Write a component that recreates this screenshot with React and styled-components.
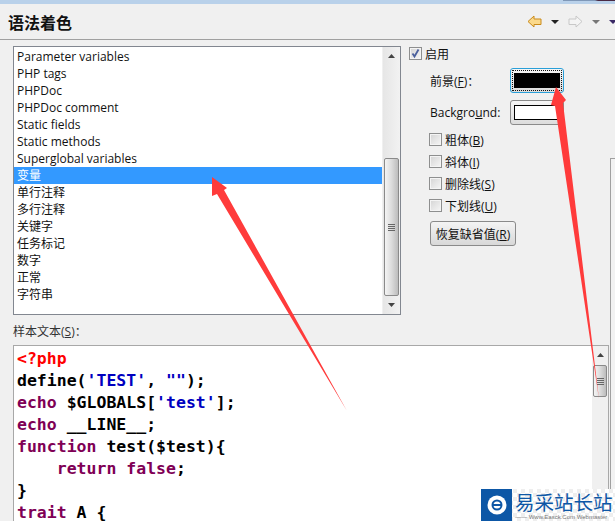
import React from 'react';
import styled, { createGlobalStyle } from 'styled-components';

const Global = createGlobalStyle`
  html, body { margin: 0; padding: 0; background: #f0f0f0; }
  body { width: 615px; height: 521px; overflow: hidden; }
`;

const UI = '"Liberation Sans", "Noto Sans CJK SC", sans-serif';

const Page = styled.div`
  position: relative;
  width: 615px;
  height: 521px;
  overflow: hidden;
  background: #f0f0f0;
  font-family: "Open Sans", "Noto Sans CJK SC", sans-serif;
  font-size: 12px;
  color: #111;
`;

const TopStrip = styled.div`
  height: 4px;
  background:
    linear-gradient(to right, transparent 563px, #7f98b8 563px, #7f98b8 595px, #4a2a44 598px) 0 0 / 100% 1px no-repeat,
    #b9d1ea;
`;

const Header = styled.header`
  display: flex;
  align-items: center;
  justify-content: space-between;
  height: 35px;
  padding: 0 0 0 8px;
  border-bottom: 1px solid #a0a0a0;
`;

const Title = styled.h1`
  margin: 0;
  font: bold 16px ${UI};
  color: #111;
`;

const Nav = styled.div`
  display: flex;
  align-items: center;
  gap: 9px;
  margin-right: -2px;
`;

const Body = styled.div`
  display: grid;
  grid-template-columns: 388px 1fr;
  column-gap: 8px;
  padding: 6px 0 0 13px;
`;

const ListBox = styled.div`
  display: flex;
  height: 267px;
  border: 1px solid #828790;
  background: #fff;
`;

const Items = styled.ul`
  flex: 1;
  margin: 0;
  padding: 1px 0 0;
  list-style: none;
`;

const Item = styled.li`
  height: 17px;
  line-height: 17px;
  padding-left: 3px;
  background: ${(p) => (p.$selected ? '#3399ff' : 'transparent')};
  color: ${(p) => (p.$selected ? '#fff' : '#111')};
  white-space: nowrap;
`;

const ScrollTrack = styled.div`
  display: flex;
  flex-direction: column;
  width: 17px;
  background: linear-gradient(to right, #e6e6e6, #f2f2f2);
  border-left: 1px solid #f0f0f0;
`;

const ScrollArrow = styled.div`
  flex: none;
  display: flex;
  align-items: center;
  justify-content: center;
  height: 18px;
`;

const Thumb = styled.div`
  display: flex;
  flex-direction: column;
  align-items: center;
  justify-content: center;
  gap: 1px;
  box-sizing: border-box;
  border: 1px solid #8a8a8a;
  border-radius: 2px;
  background: linear-gradient(to right, #f4f4f4, #dcdcdc 50%, #bcbcbc);
`;

const Grip = styled.i`
  display: block;
  width: 7px;
  height: 1px;
  background: #666;
`;

const ListThumb = styled(Thumb)`
  flex: 1;
  margin: 93px 1px 0;
`;

const Options = styled.div`
  display: flex;
  flex-direction: column;
  margin-top: -1px;
`;

const CheckRow = styled.label`
  display: flex;
  align-items: center;
  gap: 3px;
  height: 17px;
`;

const Box = styled.span`
  display: flex;
  align-items: center;
  justify-content: center;
  box-sizing: border-box;
  width: 13px;
  height: 13px;
  border: 1px solid #8e8f8f;
  background: linear-gradient(135deg, #d4d4d4, #f6f6f6);
  box-shadow: inset 0 0 0 1px #f4f4f4;
`;

const ColorRow = styled.div`
  display: flex;
  align-items: center;
  height: 25px;
  margin-top: ${(p) => p.$top}px;
  padding-left: 21px;
`;

const ColorLabel = styled.span`
  width: 80px;
  white-space: nowrap;
`;

const U = styled.span`
  text-decoration: underline;
`;

const Swatch = styled.div`
  display: flex;
  align-items: center;
  justify-content: center;
  box-sizing: border-box;
  width: 54px;
  height: 25px;
  border: 1px solid ${(p) => (p.$focus ? '#2a9fd8' : '#8a8a8a')};
  border-radius: 3px;
  background: linear-gradient(#f6f6f6, #dcdcdc);
  outline: ${(p) => (p.$focus ? '1px dotted #111' : 'none')};
  outline-offset: -3px;
`;

const Fill = styled.span`
  display: block;
  width: 46px;
  height: 15px;
  box-sizing: border-box;
  border: 1px solid #000;
  background: ${(p) => p.$color};
`;

const StyleList = styled.div`
  display: flex;
  flex-direction: column;
  gap: 5px;
  margin: 6px 0 0 20px;
`;

const ResetButton = styled.button`
  align-self: flex-start;
  width: 86px;
  height: 25px;
  margin: 2px 0 0 1px;
  padding: 0;
  border: 1px solid #8a8a8a;
  border-radius: 3px;
  background: linear-gradient(#f4f4f4, #d8d8d8);
  font: inherit;
  color: #111;
  white-space: nowrap;
`;

const SampleLabel = styled.div`
  height: 17px;
  margin: 8px 0 0 13px;
  line-height: 17px;
  color: #333;
`;

const Sample = styled.div`
  display: flex;
  width: 594px;
  height: 176px;
  margin: 5px 0 0 13px;
  border: 1px solid #a8a8a8;
  border-bottom: 0;
  background: #fff;
`;

const Code = styled.pre`
  flex: 1;
  margin: 0;
  padding: 2px 0 0 3px;
  font: bold 16.5px/22px "DejaVu Sans Mono", monospace;
  color: #000;
`;

const Tag = styled.span` color: #ff0000; `;
const Kw = styled.span` color: #7f0055; `;
const Str = styled.span` color: #0000c0; `;

const CodeScroll = styled.div`
  display: flex;
  flex-direction: column;
  width: 16px;
  background: #f0f0f0;
`;

const CodeThumb = styled(Thumb)`
  flex: none;
  height: 32px;
  margin: 1px 1px 0;
`;

const Sash = styled.div`
  position: absolute;
  left: 610px;
  top: 158px;
  right: -2px;
  bottom: -2px;
  border: 1px solid #a0a0a0;
  background: #f2f2f2;
`;

const Watermark = styled.div`
  position: absolute;
  right: 0;
  bottom: 0;
  display: flex;
  align-items: center;
  gap: 3px;
  width: 134px;
  height: 32px;
  background: repeating-conic-gradient(#ffffff 0 25%, #eeeeee 0 50%) 0 0 / 8px 8px;
`;

const WatermarkIcon = styled.div`
  flex: none;
  display: flex;
  align-items: center;
  justify-content: center;
  width: 31px;
  height: 32px;
  background: #0d57a6;
`;

const WatermarkText = styled.div`
  display: flex;
  flex-direction: column;
  color: #0d57a6;
`;

const Brand = styled.span`
  height: 23px;
  font: 19.5px/23px "Noto Sans CJK SC", sans-serif;
  white-space: nowrap;
`;

const Domain = styled.span`
  font: 6px/8px ${UI};
  color: #777;
  white-space: nowrap;
`;

const Overlay = styled.svg`
  position: absolute;
  inset: 0;
  pointer-events: none;
`;

const rows = [
  'Parameter variables', 'PHP tags', 'PHPDoc', 'PHPDoc comment', 'Static fields',
  'Static methods', 'Superglobal variables', '变量', '单行注释', '多行注释',
  '关键字', '任务标记', '数字', '正常', '字符串',
];

const Arrow = ({ color, stroke, flip }) => (
  <svg width="15" height="13" viewBox="0 0 15 13">
    <path
      d={flip ? 'M14 6.5 L8 1 V4 H1 V9.5 H8 V12 Z' : 'M1 6.5 L7 1 V4 H14 V9.5 H7 V12 Z'}
      fill={color}
      stroke={stroke}
      strokeWidth="1"
      strokeLinejoin="round"
    />
  </svg>
);

const Caret = ({ color = '#222', w = 8, h = 4, up }) => (
  <svg width={w} height={h} viewBox={`0 0 ${w} ${h}`}>
    <path d={up ? `M0 ${h} L${w / 2} 0 L${w} ${h} Z` : `M0 0 L${w} 0 L${w / 2} ${h} Z`} fill={color} />
  </svg>
);

const Grips = () => (
  <>
    <Grip />
    <Grip />
    <Grip />
    <Grip />
  </>
);

const StyleCheck = ({ text, hot }) => (
  <CheckRow>
    <Box />
    <span>{text}(<U>{hot}</U>)</span>
  </CheckRow>
);

export default function App() {
  return (
    <Page>
      <Global />
      <TopStrip />
      <Header>
        <Title>语法着色</Title>
        <Nav>
          <Arrow color="#fbd98a" stroke="#c98a1a" />
          <Caret />
          <Arrow color="#f4f4f4" stroke="#c8c8c8" flip />
          <Caret color="#777" />
          <Caret color="#3b2a66" />
        </Nav>
      </Header>
      <Body>
        <ListBox>
          <Items>
            {rows.map((r) => (
              <Item key={r} $selected={r === '变量'}>{r}</Item>
            ))}
          </Items>
          <ScrollTrack>
            <ScrollArrow><Caret color="#444" w={7} h={4} up /></ScrollArrow>
            <ListThumb><Grips /></ListThumb>
            <ScrollArrow><Caret color="#444" w={7} h={4} /></ScrollArrow>
          </ScrollTrack>
        </ListBox>
        <Options>
          <CheckRow>
            <Box>
              <svg width="11" height="11" viewBox="0 0 11 11">
                <path d="M2.5 5.5 L4.5 8.5 L8.5 1.5" fill="none" stroke="#4a5f9c" strokeWidth="1.8" />
              </svg>
            </Box>
            <span>启用</span>
          </CheckRow>
          <ColorRow $top={6}>
            <ColorLabel>前景(<U>F</U>)：</ColorLabel>
            <Swatch $focus><Fill $color="#000" /></Swatch>
          </ColorRow>
          <ColorRow $top={7}>
            <ColorLabel>Backgro<U>u</U>nd:</ColorLabel>
            <Swatch><Fill $color="#fff" /></Swatch>
          </ColorRow>
          <StyleList>
            <StyleCheck text="粗体" hot="B" />
            <StyleCheck text="斜体" hot="I" />
            <StyleCheck text="删除线" hot="S" />
            <StyleCheck text="下划线" hot="U" />
            <ResetButton>恢复缺省值(<U>R</U>)</ResetButton>
          </StyleList>
        </Options>
      </Body>
      <SampleLabel>样本文本(<U>S</U>)：</SampleLabel>
      <Sample>
        <Code>
          <Tag>{'<?php'}</Tag>{'\n'}
          {'define('}<Str>'TEST'</Str>{', '}<Str>""</Str>{');'}{'\n'}
          <Kw>echo</Kw>{' $GLOBALS['}<Str>'test'</Str>{'];'}{'\n'}
          <Kw>echo</Kw>{' __LINE__;'}{'\n'}
          <Kw>function</Kw>{' test($test){'}{'\n'}
          {'    '}<Kw>return</Kw> <Kw>false</Kw>{';'}{'\n'}
          {'}'}{'\n'}
          <Kw>trait</Kw>{' A {'}
        </Code>
        <CodeScroll>
          <ScrollArrow><Caret color="#444" w={7} h={4} up /></ScrollArrow>
          <CodeThumb><Grips /></CodeThumb>
        </CodeScroll>
      </Sample>
      <Sash />
      <Watermark>
        <WatermarkIcon>
          <svg width="20" height="20" viewBox="0 0 20 20">
            <circle cx="10" cy="10" r="9.5" fill="#fff" />
            <circle cx="10" cy="10" r="4.5" fill="none" stroke="#0d57a6" strokeWidth="2" />
            <path d="M5 10 H15" stroke="#0d57a6" strokeWidth="2" />
          </svg>
        </WatermarkIcon>
        <WatermarkText>
          <Brand>易采站长站</Brand>
          <Domain>—— Www.Easck.Com  Webmaster</Domain>
        </WatermarkText>
      </Watermark>
      <Overlay width="615" height="521" viewBox="0 0 615 521">
        <path d="M212 177 L227 188 L224 190 L347 411 L217 194 L212 196 Z" fill="#ff3b3b" />
        <path d="M556 87 L566 100 L563 103 L599 399 L555 106 L551 105 Z" fill="#ff3b3b" />
      </Overlay>
    </Page>
  );
}
